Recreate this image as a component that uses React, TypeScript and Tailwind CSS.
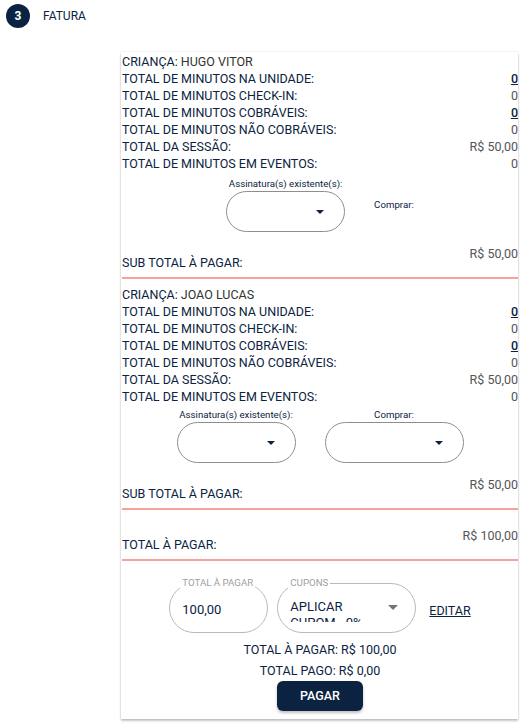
import type { ReactNode } from 'react';

const NAVY = 'text-[#0b2341]';

interface Child {
  name: string;
  sessao: string;
  showCompraSelect: boolean;
}

const children: Child[] = [
  { name: 'HUGO VITOR', sessao: 'R$ 50,00', showCompraSelect: false },
  { name: 'JOAO LUCAS', sessao: 'R$ 50,00', showCompraSelect: true },
];

function Row({ label, children }: { label: string; children: ReactNode }) {
  return (
    <div className="flex justify-between text-[12.5px] leading-[17px]">
      <span className={NAVY}>{label}</span>
      {children}
    </div>
  );
}

function Caret() {
  return (
    <svg width="8" height="4" viewBox="0 0 8 4" className="shrink-0">
      <path d="M0 0h8L4 4z" fill="#0b2341" />
    </svg>
  );
}

function PillSelect({ width }: { width: string }) {
  return (
    <div
      className={`${width} h-[41px] rounded-full border border-[#8e8e8e] flex items-center justify-end pr-[20px]`}
    >
      <Caret />
    </div>
  );
}

function SubTotal({ label, value }: { label: string; value: string }) {
  return (
    <div className="border-b-2 border-[#f5a39b] pb-[4px]">
      <div className="flex justify-between h-[28px]">
        <span className={`self-end text-[12.5px] leading-[20px] ${NAVY}`}>{label}</span>
        <span className="self-start text-[12.5px] leading-[17px] text-[#555]">{value}</span>
      </div>
    </div>
  );
}

function ChildSection({ child, first }: { child: Child; first: boolean }) {
  const zero = <span className={`${NAVY} underline font-medium`}>0</span>;
  const gray = (v: string) => <span className="text-[#555]">{v}</span>;
  return (
    <div className={first ? 'pt-[1px]' : 'pt-[7px]'}>
      <div className="flex text-[12.5px] leading-[17px]">
        <span className={NAVY}>CRIANÇA:</span>
        <span className="ml-[3px] text-[#333]">{child.name}</span>
      </div>
      <Row label="TOTAL DE MINUTOS NA UNIDADE:">{zero}</Row>
      <Row label="TOTAL DE MINUTOS CHECK-IN:">{gray('0')}</Row>
      <Row label="TOTAL DE MINUTOS COBRÁVEIS:">{zero}</Row>
      <Row label="TOTAL DE MINUTOS NÃO COBRÁVEIS:">{gray('0')}</Row>
      <Row label="TOTAL DA SESSÃO:">{gray(child.sessao)}</Row>
      <Row label="TOTAL DE MINUTOS EM EVENTOS:">{gray('0')}</Row>

      <div className={`flex justify-center items-center gap-[29px] ${first ? 'mt-[6px]' : 'mt-[4px]'}`}>
        <div className="flex flex-col items-center">
          <span className={`text-[9.7px] leading-[12px] ${NAVY}`}>Assinatura(s) existente(s):</span>
          <div className="mt-[1px]">
            <PillSelect width="w-[119px]" />
          </div>
        </div>
        <div className="flex flex-col items-center">
          <span className={`text-[9.7px] leading-[12px] ${NAVY}`}>Comprar:</span>
          {child.showCompraSelect && (
            <div className="mt-[1px]">
              <PillSelect width="w-[139px]" />
            </div>
          )}
        </div>
      </div>

      <div className="mt-[13px]">
        <SubTotal label="SUB TOTAL À PAGAR:" value="R$ 50,00" />
      </div>
    </div>
  );
}

function OutlinedField({
  label,
  width,
  children,
}: {
  label: string;
  width: string;
  children: ReactNode;
}) {
  return (
    <fieldset className={`${width} rounded-full border border-[#b9b9b9] pl-[10px] pr-[6px]`}>
      <legend className="px-[2px] text-[9.7px] leading-[12px] text-[#a0a0a0] whitespace-nowrap">
        {label}
      </legend>
      <div className="h-[43px]">{children}</div>
    </fieldset>
  );
}

export default function App() {
  return (
    <div className="min-h-[726px] bg-white font-['Roboto','Liberation_Sans',sans-serif]">
      <div className="flex items-center gap-[13px] pl-[6px] pt-[4px]">
        <div className="w-[24px] h-[24px] rounded-full bg-[#0b2341] flex items-center justify-center text-white text-[12px] font-bold">
          3
        </div>
        <span className={`text-[12px] ${NAVY}`}>FATURA</span>
      </div>

      <div className="ml-[121px] mt-[24px] w-[397px] bg-white shadow-[0_2px_2px_rgba(0,0,0,0.22),0_0_2px_rgba(0,0,0,0.12)] pl-[1px] pb-[8px]">
        {children.map((c, i) => (
          <ChildSection key={c.name} child={c} first={i === 0} />
        ))}

        <div className="mt-[17px]">
          <SubTotal label="TOTAL À PAGAR:" value="R$ 100,00" />
        </div>

        <div className="mt-[16px] flex justify-center items-center">
          <OutlinedField label="TOTAL À PAGAR" width="w-[99px]">
            <div className={`pt-[12px] pl-[2px] text-[13px] leading-[17px] ${NAVY}`}>100,00</div>
          </OutlinedField>
          <div className="ml-[9px]">
            <OutlinedField label="CUPONS" width="w-[139px]">
              <div className="flex items-start pt-[10px]">
                <div className={`w-[92px] h-[23px] overflow-hidden pl-[2px] text-[13px] leading-[16px] ${NAVY}`}>
                  APLICAR CUPOM - 0%
                </div>
                <svg width="10" height="5" viewBox="0 0 10 5" className="ml-[8px] mt-[6px]">
                  <path d="M0 0h10L5 5z" fill="#757575" />
                </svg>
              </div>
            </OutlinedField>
          </div>
          <span className={`ml-[13px] text-[12.5px] underline ${NAVY} mt-[12px]`}>EDITAR</span>
        </div>

        <div className={`mt-[6px] text-center text-[12.5px] leading-[21px] ${NAVY}`}>
          TOTAL À PAGAR: R$ 100,00
        </div>
        <div className={`text-center text-[12.5px] leading-[21px] ${NAVY}`}>TOTAL PAGO: R$ 0,00</div>
        <div className="flex justify-center">
          <button className="w-[86px] h-[30px] rounded-[6px] bg-[#0b2341] text-white text-[12.5px] font-medium shadow-[0_2px_3px_rgba(0,0,0,0.25)]">
            PAGAR
          </button>
        </div>
      </div>
    </div>
  );
}
